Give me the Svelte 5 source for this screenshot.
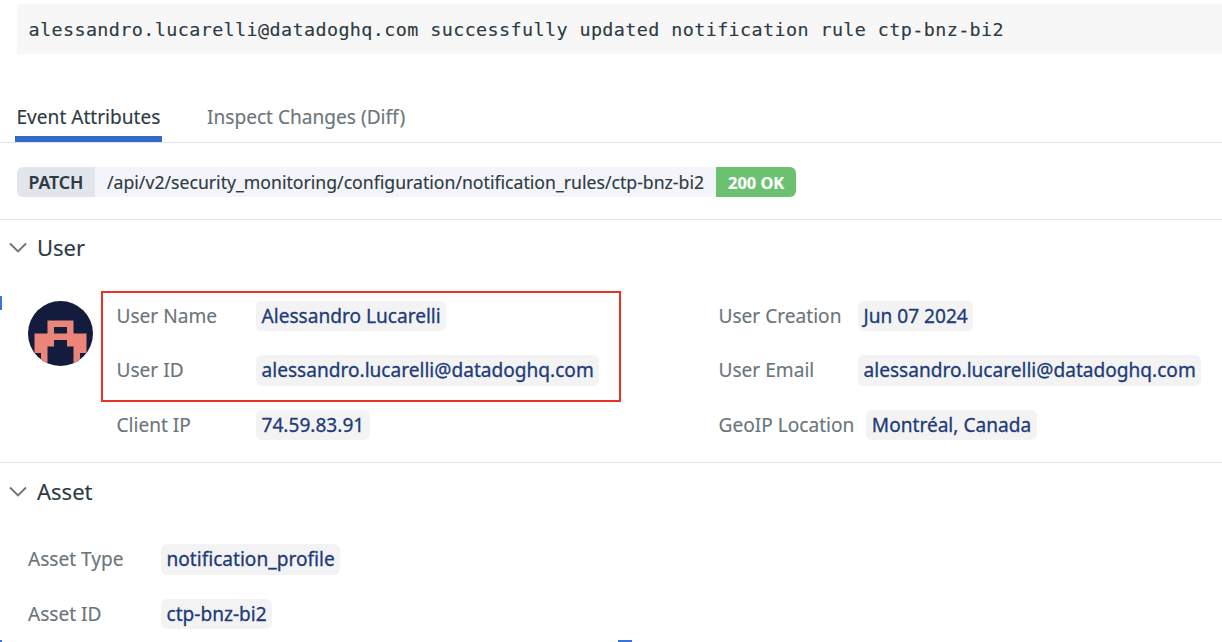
<script>
  const userLeft = [
    ['User Name', 'Alessandro Lucarelli'],
    ['User ID', 'alessandro.lucarelli@datadoghq.com'],
    ['Client IP', '74.59.83.91'],
  ];
  const userRight = [
    ['User Creation', 'Jun 07 2024'],
    ['User Email', 'alessandro.lucarelli@datadoghq.com'],
    ['GeoIP Location', 'Montréal, Canada'],
  ];
  const asset = [
    ['Asset Type', 'notification_profile'],
    ['Asset ID', 'ctp-bnz-bi2'],
  ];
</script>

{#snippet attributes(rows)}
  {#each rows as [label, value]}
    <div class="row"><span class="label">{label}</span><span class="value">{value}</span></div>
  {/each}
{/snippet}

{#snippet heading(title)}
  <h2>
    <svg width="18" height="12" viewBox="0 0 18 12" fill="none" stroke="#6b757b" stroke-width="1.9"><path d="M1 1.5 9 9.5 17 1.5" /></svg>
    <span>{title}</span>
  </h2>
{/snippet}

<main>
  <div class="message">alessandro.lucarelli@datadoghq.com successfully updated notification rule ctp-bnz-bi2</div>

  <nav>
    <span class="tab active">Event Attributes</span>
    <span class="tab">Inspect Changes (Diff)</span>
  </nav>

  <div class="request">
    <span class="method">PATCH</span>
    <span class="path">/api/v2/security_monitoring/configuration/notification_rules/ctp-bnz-bi2</span>
    <span class="status">200 OK</span>
  </div>

  <section class="user">
    {@render heading('User')}
    <div class="columns">
      <svg class="avatar" width="65" height="65" viewBox="0 0 10 10">
        <defs><clipPath id="disc"><circle cx="5" cy="5" r="5" /></clipPath></defs>
        <g clip-path="url(#disc)">
          <rect width="10" height="10" fill="#141c3d" />
          <path fill="#eb8479" fill-rule="evenodd" d="M3 3H7V5H9V8H8V10H7V7H6V6H4V7H3V10H2V8H1V5H3ZM4 4V5H6V4Z" />
        </g>
      </svg>
      <div class="list left">{@render attributes(userLeft)}</div>
      <div class="list right">{@render attributes(userRight)}</div>
    </div>
  </section>

  <section class="asset">
    {@render heading('Asset')}
    <div class="list">{@render attributes(asset)}</div>
  </section>

  <i class="highlight"></i>
  <i class="mark side"></i>
  <i class="mark corner"></i>
  <i class="mark bottom"></i>
</main>

<style>
  :global(body) { margin: 0; background: #fff; }
  main {
    position: relative;
    box-sizing: border-box;
    width: 1222px;
    height: 642px;
    padding-top: 4px;
    overflow: hidden;
    background: #fff;
    color: #2e3b43;
    font-family: "Noto Sans", sans-serif;
    font-size: 19.1px;
    -webkit-text-stroke: 0.15px currentColor;
  }
  .message {
    box-sizing: border-box;
    height: 50px;
    margin-left: 16.5px;
    padding-left: 12px;
    background: #f7f7f7;
    font: 18.4px/52px "DejaVu Sans Mono", monospace;
    letter-spacing: 0.405px;
    white-space: pre;
  }
  nav {
    display: flex;
    gap: 43px;
    box-sizing: border-box;
    height: 89px;
    padding: 45px 0 0 15px;
    border-bottom: 1px solid #e2e2eb;
    line-height: 36px;
  }
  .tab { box-sizing: border-box; height: 43px; padding: 0 2px; color: #6b757b; white-space: nowrap; }
  .active { width: 147px; padding-left: 1.5px; color: #2e3b43; border-bottom: 6px solid #2f6bc4; }
  .request {
    display: flex;
    box-sizing: border-box;
    height: 77px;
    padding: 24px 0 0 17px;
    border-bottom: 1px solid #e2e2eb;
    font-size: 17.65px;
    line-height: 30px;
    white-space: nowrap;
  }
  .request span { box-sizing: border-box; height: 30px; }
  .method { width: 78px; padding-left: 11.5px; border-radius: 6px 0 0 6px; background: #e2e5ec; font-weight: 600; }
  .path { width: 621px; padding-left: 12px; background: #f4f5fa; }
  .status { width: 79.5px; padding-left: 12px; border-radius: 0 6px 6px 0; background: #6bc16f; color: #fff; font-size: 16.4px; font-weight: 700; line-height: 32px; }
  .user { box-sizing: border-box; height: 243px; padding-top: 8px; border-bottom: 1px solid #e2e2eb; }
  .asset { padding-top: 9px; }
  h2 { display: flex; align-items: center; gap: 10px; height: 40px; margin: 0; padding-left: 9px; font-size: 22px; line-height: 39px; font-weight: 400; }
  h2 span { height: 40px; }
  .columns { display: flex; padding: 32.5px 0 0 28px; }
  .avatar { flex: none; }
  .list { display: grid; grid-auto-rows: 30.5px; gap: 24px; }
  .left { box-sizing: border-box; flex: none; width: 625.5px; padding-left: 23.5px; }
  .row { display: flex; line-height: 31px; white-space: nowrap; }
  .label { flex: none; box-sizing: border-box; min-width: 139.5px; color: #6b757b; }
  .right .label { padding-right: 12px; }
  .value { padding: 0 5.5px; border-radius: 6px; background: #f3f3f3; color: #213b78; -webkit-text-stroke-width: 0.3px; }
  .asset .list { padding: 32px 0 0 28px; }
  .asset .label { min-width: 133px; }
  .highlight { position: absolute; left: 101px; top: 291px; width: 516px; height: 106.5px; border: 2px solid #e83323; }
  .mark { position: absolute; background: #3973dc; }
  .side { left: 0; top: 296px; width: 2px; height: 14px; }
  .corner { left: 0; top: 640px; width: 2px; height: 2px; }
  .bottom { left: 618px; top: 640px; width: 14px; height: 2px; }
</style>
